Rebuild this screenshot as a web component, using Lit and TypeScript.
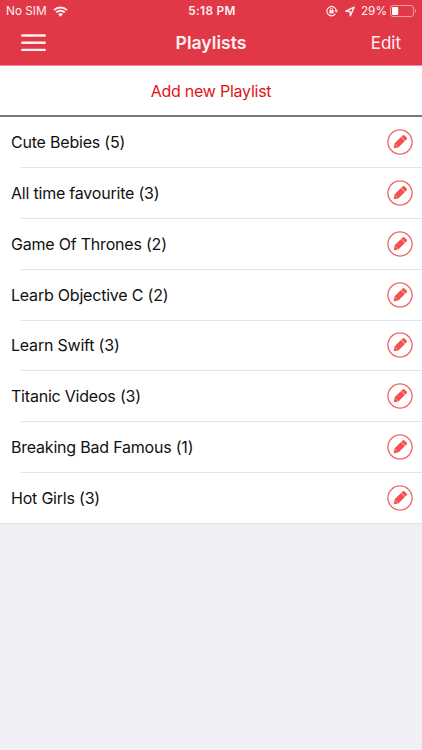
import { LitElement, html, css } from "lit";
import { customElement } from "lit/decorators.js";

interface Playlist {
  name: string;
  count: number;
}

const PLAYLISTS: Playlist[] = [
  { name: "Cute Bebies", count: 5 },
  { name: "All time favourite", count: 3 },
  { name: "Game Of Thrones", count: 2 },
  { name: "Learb Objective C", count: 2 },
  { name: "Learn Swift", count: 3 },
  { name: "Titanic Videos", count: 3 },
  { name: "Breaking Bad Famous", count: 1 },
  { name: "Hot Girls", count: 3 },
];

@customElement("status-bar")
class StatusBar extends LitElement {
  static styles = css`
    :host {
      display: grid;
      grid-template-columns: 1fr auto 1fr;
      align-items: center;
      height: 22px;
      padding: 0 5px 0 6px;
      box-sizing: border-box;
      color: #ffeef0;
      font-size: 11.8px;
      white-space: nowrap;
    }
    .side {
      display: flex;
      align-items: center;
    }
    .right {
      justify-content: flex-end;
    }
    .time {
      padding-left: 1px;
      font-weight: 600;
      letter-spacing: 0.35px;
    }
    svg {
      display: block;
      flex: none;
    }
    .wifi {
      margin-left: 6px;
    }
    .arrow {
      margin: 0 6px 0 7px;
    }
    .battery {
      margin-left: 3px;
    }
  `;
  render() {
    return html`
      <div class="side">
        <span>No SIM</span>
        <svg class="wifi" width="15" height="11" viewBox="0 0 15 11" fill="none" stroke="currentColor" stroke-width="2">
          <path d="M1 4.1a9.3 9.3 0 0 1 13 0" />
          <path d="M3.3 6.5a6 6 0 0 1 8.4 0" />
          <path d="M7.5 10.7 5.1 8.3a3.4 3.4 0 0 1 4.8 0z" fill="currentColor" stroke="none" />
        </svg>
      </div>
      <span class="time">5:18 PM</span>
      <div class="side right">
        <svg width="12" height="12" viewBox="0 0 12 12" fill="none" stroke="currentColor" stroke-width="1.1">
          <path d="M9.4 8.9A4.7 4.7 0 1 1 10.2 5.2" />
          <path d="M8.5 5.2h3.5L10.2 7.8z" fill="currentColor" stroke="none" />
          <rect x="3.4" y="5.1" width="4.2" height="3.4" rx=".4" fill="currentColor" stroke="none" />
          <path d="M4.3 5.4V4.5a1.2 1.2 0 0 1 2.4 0v.9" stroke-width=".9" />
        </svg>
        <svg class="arrow" width="10" height="11" viewBox="0 0 10 11" fill="none" stroke="currentColor" stroke-width="1.4" stroke-linejoin="round">
          <path d="M9.1 1.2.9 5.2l4.1.3.4 4.3z" />
        </svg>
        <span>29%</span>
        <svg class="battery" width="27" height="12" viewBox="0 0 27 12">
          <rect x=".5" y=".5" width="23" height="11" rx="2.5" fill="none" stroke="#f09ca3" />
          <rect x="2" y="2" width="6.2" height="8" rx="1" fill="#fff" />
          <path d="M25 4c1.5.5 1.5 3.5 0 4z" fill="#f09ca3" />
        </svg>
      </div>
    `;
  }
}

@customElement("nav-bar")
class NavBar extends LitElement {
  static styles = css`
    :host {
      display: grid;
      grid-template-columns: 1fr auto 1fr;
      align-items: center;
      height: 43px;
      padding: 0 21px 1px;
      box-sizing: border-box;
      color: #fff0f2;
    }
    svg {
      display: block;
    }
    .title {
      padding-bottom: 1px;
      font-size: 17.6px;
      font-weight: 600;
    }
    .edit {
      justify-self: end;
      font-size: 17px;
    }
  `;
  render() {
    return html`
      <svg width="25" height="18" viewBox="0 0 25 18" stroke="currentColor" stroke-width="2.4" stroke-linecap="round">
        <path d="M1.3 1.5h22.4M1.3 8.7h22.4M1.3 15.9h22.4" />
      </svg>
      <span class="title">Playlists</span>
      <span class="edit">Edit</span>
    `;
  }
}

@customElement("playlist-row")
class PlaylistRow extends LitElement {
  static properties = { playlist: { attribute: false } };
  declare playlist: Playlist;
  static styles = css`
    :host {
      display: flex;
      align-items: center;
      justify-content: space-between;
      height: 50.875px;
      padding: 0 9px 1px 11px;
      box-sizing: border-box;
      font-size: 16px;
      letter-spacing: -0.21px;
      color: #111;
      background: linear-gradient(#e4e4e6, #e4e4e6) right bottom / var(--rule-width, calc(100% - 21px)) 1px no-repeat;
    }
    svg {
      display: block;
      flex: none;
    }
  `;
  render() {
    return html`
      <span>${this.playlist.name} (${this.playlist.count})</span>
      <svg width="26" height="26" viewBox="0 0 26 26">
        <circle cx="13" cy="13" r="12.1" fill="none" stroke="#ee6663" stroke-width="1.3" />
        <g transform="translate(6.8 19.2) rotate(-45)" fill="#f4514d">
          <path d="M0 0 3.6-2.6V2.6z" />
          <path d="M3.7-2.8h9.2v5.6H3.7z" />
          <path d="M13.4-2.8h1.9q1.3 0 1.3 1.3v3q0 1.3-1.3 1.3h-1.9z" />
        </g>
      </svg>
    `;
  }
}

@customElement("app-root")
class AppRoot extends LitElement {
  static styles = css`
    :host {
      display: block;
      height: 100vh;
      overflow: hidden;
      background: #efeff4;
      font-family: Inter, "Liberation Sans", sans-serif;
    }
    .header {
      background: #e13847;
      border-bottom: 1px solid #ec8c94;
    }
    .add {
      display: flex;
      align-items: center;
      justify-content: center;
      height: 51px;
      box-sizing: border-box;
      border-bottom: 2px solid #777;
      background: #fff;
      color: #e01414;
      font-size: 16px;
      letter-spacing: -0.24px;
    }
    .list {
      background: #fff;
    }
    .last {
      --rule-width: 100%;
    }
  `;
  render() {
    return html`
      <div class="header">
        <status-bar></status-bar>
        <nav-bar></nav-bar>
      </div>
      <div class="add">Add new Playlist</div>
      <div class="list">
        ${PLAYLISTS.map(
          (p, i) => html`<playlist-row class=${i === PLAYLISTS.length - 1 ? "last" : ""} .playlist=${p}></playlist-row>`
        )}
      </div>
    `;
  }
}
